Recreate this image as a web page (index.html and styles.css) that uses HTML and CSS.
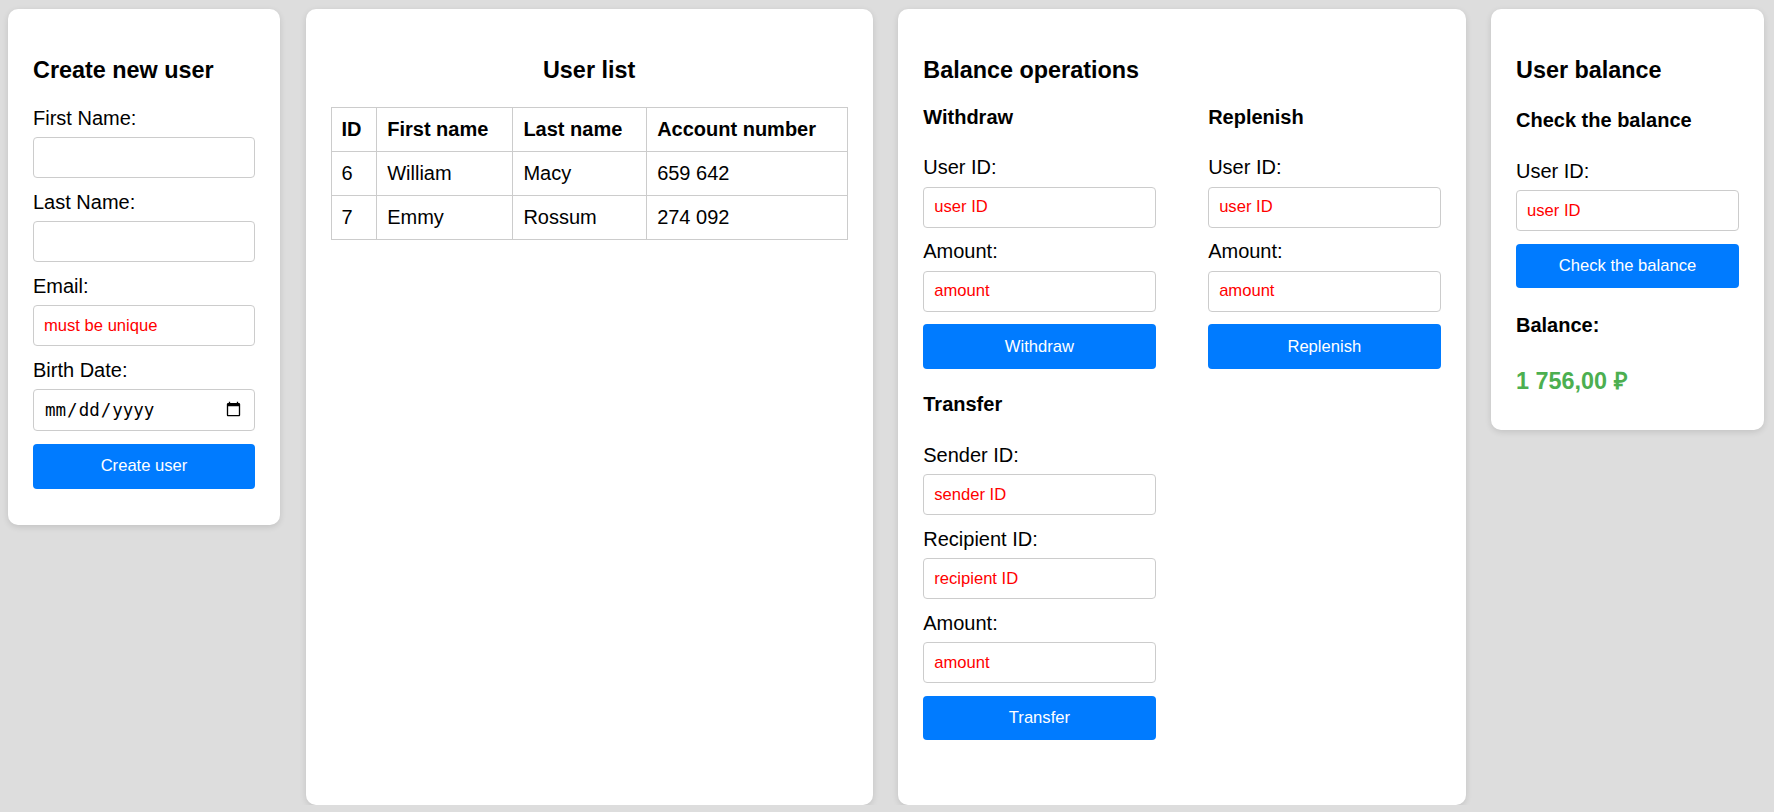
FILE: index.html
```html
<!DOCTYPE html>
<html lang="en">
<head>
<meta charset="utf-8">
<title>Users</title>
<link rel="stylesheet" href="styles.css">
</head>
<body>
<main class="board">
  <section class="card card-create">
    <h3 class="card-title">Create new user</h3>
    <form class="form">
      <label class="field-label">First Name:</label>
      <input class="input" type="text">
      <label class="field-label">Last Name:</label>
      <input class="input" type="text">
      <label class="field-label">Email:</label>
      <input class="input" type="text" placeholder="must be unique">
      <label class="field-label">Birth Date:</label>
      <input class="input input-date" type="date">
      <button class="btn btn-create" type="button">Create user</button>
    </form>
  </section>

  <section class="card card-list">
    <h3 class="card-title card-title-center">User list</h3>
    <table class="users">
      <thead>
        <tr><th>ID</th><th>First name</th><th>Last name</th><th>Account number</th></tr>
      </thead>
      <tbody>
        <tr><td>6</td><td>William</td><td>Macy</td><td>659 642</td></tr>
        <tr><td>7</td><td>Emmy</td><td>Rossum</td><td>274 092</td></tr>
      </tbody>
    </table>
  </section>

  <section class="card card-ops">
    <h3 class="card-title card-title-ops">Balance operations</h3>
    <div class="ops-grid">
      <div class="op">
        <h4 class="sub-title">Withdraw</h4>
        <label class="field-label">User ID:</label>
        <input class="input" type="text" placeholder="user ID">
        <label class="field-label">Amount:</label>
        <input class="input" type="text" placeholder="amount">
        <button class="btn" type="button">Withdraw</button>
      </div>
      <div class="op">
        <h4 class="sub-title">Replenish</h4>
        <label class="field-label">User ID:</label>
        <input class="input" type="text" placeholder="user ID">
        <label class="field-label">Amount:</label>
        <input class="input" type="text" placeholder="amount">
        <button class="btn" type="button">Replenish</button>
      </div>
      <div class="op">
        <h4 class="sub-title">Transfer</h4>
        <label class="field-label">Sender ID:</label>
        <input class="input" type="text" placeholder="sender ID">
        <label class="field-label">Recipient ID:</label>
        <input class="input" type="text" placeholder="recipient ID">
        <label class="field-label">Amount:</label>
        <input class="input" type="text" placeholder="amount">
        <button class="btn" type="button">Transfer</button>
      </div>
    </div>
  </section>

  <section class="card card-balance">
    <h3 class="card-title card-title-balance">User balance</h3>
    <h4 class="sub-title">Check the balance</h4>
    <label class="field-label">User ID:</label>
    <input class="input" type="text" placeholder="user ID">
    <button class="btn btn-check" type="button">Check the balance</button>
    <h4 class="sub-title balance-label">Balance:</h4>
    <div class="balance-value">1&nbsp;756,00&nbsp;₽</div>
  </section>
</main>
</body>
</html>
```

FILE: styles.css
```css
* {
  box-sizing: border-box;
}

html, body {
  margin: 0;
  padding: 0;
}

body {
  background: #dddddd;
  font-family: "Liberation Sans", Arial, sans-serif;
  font-size: 20px;
  line-height: 23px;
  color: #000;
}

.board {
  display: flex;
  align-items: flex-start;
  gap: 25.5px;
  padding: 9px 10px 0 8px;
}

.card {
  background: #fff;
  border-radius: 10px;
  box-shadow: 0 2px 6px rgba(0, 0, 0, 0.12);
  padding: 25px 25px;
}

.card-create {
  width: 272px;
  flex: none;
  padding-bottom: 36px;
}

.card-list {
  flex: 1 1 0;
  min-width: 0;
  align-self: stretch;
}

.card-ops {
  flex: 1 1 0;
  min-width: 0;
  padding-bottom: 64.5px;
}

.card-balance {
  width: 273px;
  flex: none;
  padding-bottom: 35px;
}

.card-title {
  font-size: 23.4px;
  line-height: 27px;
  font-weight: bold;
  margin: 23.4px 0 22.5px;
}

.card-title-center {
  text-align: center;
  margin-bottom: 22.9px;
}

.card-title-ops {
  margin-bottom: 21.5px;
}

.card-title-balance {
  margin-bottom: 24.8px;
}

.sub-title {
  font-size: 20px;
  line-height: 23px;
  font-weight: bold;
  margin: 0 0 27.5px;
}

.form {
  margin: 0;
}

.field-label {
  display: block;
  font-size: 20px;
  line-height: 23px;
  margin: 0 0 7.4px;
}

.input {
  display: block;
  width: 100%;
  height: 41px;
  margin: 0 0 12.6px;
  padding: 0 10px;
  border: 1px solid #cccccc;
  border-radius: 4px;
  background: #fff;
  font-family: "Liberation Sans", Arial, sans-serif;
  font-size: 16.6px;
  color: #000;
  outline: none;
}

.input::placeholder {
  color: #ff0000;
  opacity: 1;
}

.input-date {
  height: 42px;
  font-family: "DejaVu Sans Mono", "Liberation Mono", monospace;
  font-size: 17.5px;
}

.btn {
  display: block;
  width: 100%;
  height: 44.7px;
  margin: 2px 0 0;
  padding: 0;
  border: none;
  border-radius: 4px;
  background: #007bff;
  color: #fff;
  font-family: "Liberation Sans", Arial, sans-serif;
  font-size: 16.6px;
  cursor: pointer;
}

.btn-create {
  margin-top: 3px;
}

.btn-check {
  margin-top: 4px;
}

.users {
  width: 100%;
  border-collapse: collapse;
  font-size: 20px;
  line-height: 23px;
}

.users th,
.users td {
  border: 1px solid #cccccc;
  padding: 10px;
  text-align: left;
}

.users th {
  font-weight: bold;
}

.ops-grid {
  display: grid;
  grid-template-columns: 1fr 1fr;
  column-gap: 52.5px;
  row-gap: 24.3px;
}

.op .btn {
  margin-top: 0.4px;
}

.balance-label {
  margin-top: 25.3px;
  margin-bottom: 31.6px;
}

.balance-value {
  font-size: 23.4px;
  line-height: 27px;
  font-weight: bold;
  color: #4caf50;
}
```
